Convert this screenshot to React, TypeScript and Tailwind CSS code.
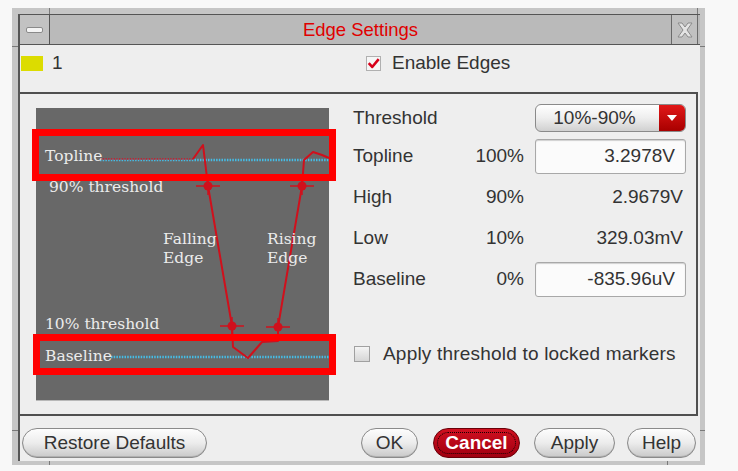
import React from "react";

const sans = { fontFamily: '"Liberation Sans", Arial, sans-serif' };

function Chart() {
  const red = "#d0101c";
  const markers: [number, number][] = [
    [208, 186],
    [302, 186],
    [232, 326],
    [278, 327],
  ];
  const serif = { fontFamily: '"DejaVu Serif", serif', fontSize: 15.5 };
  return (
    <svg width={310} height={300} viewBox="30 104 310 300" className="block shrink-0">
      <rect x={36} y={108} width={293} height={293} fill="#686868" />
      <line x1={36} x2={329} y1={400.5} y2={400.5} stroke="#b8b8b8" strokeWidth={1} />
      <line x1={100} x2={329} y1={160} y2={160} stroke="#45bde6" strokeWidth={2.5} strokeDasharray="1.5 1.2" />
      <line x1={100} x2={193} y1={159} y2={159} stroke={red} strokeWidth={1.5} strokeDasharray="1.5 1.2" />
      <line x1={111} x2={329} y1={357} y2={357} stroke="#45bde6" strokeWidth={2.5} strokeDasharray="1.5 1.2" />
      <polyline
        points="193,159 203,145 208,186 232,326 233,347 248,358 262,342 278,341 278,327 302,186 304,160 313,152 322,155 329,158"
        fill="none"
        stroke={red}
        strokeWidth={2}
        strokeLinejoin="round"
      />
      {markers.map(([x, y], i) => (
        <g key={i}>
          <line x1={x - 12} x2={x + 12} y1={y} y2={y} stroke={red} strokeWidth={1.5} />
          <line x1={x} x2={x} y1={y - 9} y2={y + 9} stroke={red} strokeWidth={1.5} />
          <circle cx={x} cy={y} r={4.5} fill={red} />
        </g>
      ))}
      <rect x={35.5} y={132.5} width={297} height={45} fill="none" stroke="#ff0000" strokeWidth={7} />
      <rect x={36.5} y={337.5} width={296} height={34} fill="none" stroke="#ff0000" strokeWidth={7} />
      <g fill="#ececec" style={serif}>
        <text x={45} y={161}>Topline</text>
        <text x={49} y={192}>90% threshold</text>
        <text x={163} y={244}>Falling</text>
        <text x={163} y={263}>Edge</text>
        <text x={267} y={244}>Rising</text>
        <text x={267} y={263}>Edge</text>
        <text x={45} y={329}>10% threshold</text>
        <text x={45} y={361}>Baseline</text>
      </g>
    </svg>
  );
}

function PillButton({ label, w, className = "" }: { label: string; w: string; className?: string }) {
  return (
    <div
      className={`h-[30px] ${w} rounded-full border border-[#8a8a8a] bg-gradient-to-b from-[#fdfdfd] via-[#ececec] to-[#c9c9c9] flex items-center justify-center text-[19px] text-[#333] shadow-[inset_0_-1px_0_#b0b0b0] ${className}`}
    >
      {label}
    </div>
  );
}

export default function App() {
  return (
    <div className="w-[738px] h-[471px] bg-[#f8f8f8] pt-[8px] pl-[12px] overflow-hidden" style={sans}>
      <div className="relative w-[693px] h-[457px] bg-[#c6c6c6] pt-[6px] pl-[6px] pr-[5px] pb-[4px]">
        {/* frame notches */}
        <div className="absolute left-[37px] top-0 w-px h-[6px] bg-[#7a7a7a]" />
        <div className="absolute left-[685px] top-0 w-px h-[6px] bg-[#7a7a7a]" />
        <div className="absolute left-0 top-[38px] w-[6px] h-px bg-[#7a7a7a]" />
        <div className="absolute left-0 top-[422px] w-[6px] h-px bg-[#7a7a7a]" />
        <div className="absolute right-0 top-[38px] w-[5px] h-px bg-[#7a7a7a]" />
        <div className="absolute right-0 top-[422px] w-[5px] h-px bg-[#7a7a7a]" />
        <div className="absolute left-[37px] bottom-0 w-px h-[4px] bg-[#7a7a7a]" />
        <div className="absolute left-[655px] bottom-0 w-px h-[4px] bg-[#7a7a7a]" />

        <div className="w-[682px] h-[447px] border-l-2 border-t border-[#555] flex flex-col bg-[#eeeeee]">
          {/* title bar */}
          <div className="h-[30px] shrink-0 flex border-b border-[#555] bg-[#bababa]">
            <div className="w-[30px] h-full border-r border-[#555] flex items-center justify-center bg-[#c2c2c2]">
              <div className="w-[17px] h-[6px] rounded-[2px] border border-[#8a8a8a] bg-[#f4f4f4]" />
            </div>
            <div className="flex-1 flex items-center justify-center text-[18.5px] text-[#e00000]">
              Edge Settings
            </div>
            <div className="w-[27px] h-full border-l border-r border-[#6a6a6a] flex items-center justify-center bg-[#c0c0c0]">
              <svg width="20" height="20" viewBox="0 0 20 20">
                <path
                  d="M3 3 L7 3 L10 7 L13 3 L17 3 L12 10 L17 17 L13 17 L10 13 L7 17 L3 17 L8 10 Z"
                  fill="#e4e4e4"
                  stroke="#8a8a8a"
                  strokeWidth="1"
                  strokeLinejoin="round"
                />
              </svg>
            </div>
            <div className="w-[2px]" />
          </div>

          {/* row 1 */}
          <div className="h-[47px] shrink-0 flex items-center pb-[10px] text-[19px] text-[#333]">
            <div className="ml-[1px] w-[22px] h-[15px] bg-[#dcdc00]" />
            <div className="ml-[9px] w-[20px]">1</div>
            <div className="ml-[294px] w-[15px] h-[15px] border border-[#b0b0b0] bg-[#f6f6f6] flex items-center justify-center">
              <svg width="15" height="15" viewBox="0 0 15 15">
                <path d="M2 7 L6 11.5 L13.5 2.5" fill="none" stroke="#d8001a" strokeWidth="3" strokeLinejoin="round" />
              </svg>
            </div>
            <div className="ml-[11px]">Enable Edges</div>
          </div>

          {/* group box */}
          <div className="w-[678px] h-[324px] shrink-0 border-t-2 border-r-2 border-b-2 border-[#4f4f4f] flex">
            <div className="ml-[10px] mt-[10px]">
              <Chart />
            </div>
            <div className="ml-[13px] mt-[10px] w-[333px] flex flex-col text-[19px] text-[#333]">
              <div className="h-[28px] grid grid-cols-[120px_51px_162px] items-center">
                <div>Threshold</div>
                <div />
                <div className="ml-[11px] h-[28px] rounded-[6px] border border-[#8a8a8a] bg-gradient-to-b from-[#ffffff] via-[#eeeeee] to-[#d0d0d0] flex overflow-hidden">
                  <div className="flex-1 flex items-center justify-center pr-[6px]">10%-90%</div>
                  <div className="w-[26px] h-full bg-gradient-to-b from-[#e21818] to-[#a80000] flex items-center justify-center">
                    <svg width="10" height="6" viewBox="0 0 10 6">
                      <path d="M0 0 L10 0 L5 6 Z" fill="#ffffff" />
                    </svg>
                  </div>
                </div>
              </div>
              <div className="mt-[7px] h-[35px] grid grid-cols-[120px_51px_162px] items-center">
                <div>Topline</div>
                <div className="text-right">100%</div>
                <div className="ml-[11px] h-[35px] rounded-[3px] border border-[#a8a8a8] bg-[#fbfbfb] shadow-[inset_0_1px_1px_#d0d0d0] flex items-center justify-end pr-[10px]">
                  3.2978V
                </div>
              </div>
              <div className="mt-[2px] h-[42px] grid grid-cols-[120px_51px_162px] items-center">
                <div>High</div>
                <div className="text-right">90%</div>
                <div className="text-right pr-[3px]">2.9679V</div>
              </div>
              <div className="h-[40px] grid grid-cols-[120px_51px_162px] items-center">
                <div>Low</div>
                <div className="text-right">10%</div>
                <div className="text-right pr-[3px]">329.03mV</div>
              </div>
              <div className="mt-[4px] h-[35px] grid grid-cols-[120px_51px_162px] items-center">
                <div>Baseline</div>
                <div className="text-right">0%</div>
                <div className="ml-[11px] h-[35px] rounded-[3px] border border-[#a8a8a8] bg-[#fbfbfb] shadow-[inset_0_1px_1px_#d0d0d0] flex items-center justify-end pr-[10px]">
                  -835.96uV
                </div>
              </div>
              <div className="mt-[49px] h-[16px] flex items-center">
                <div className="ml-[1px] w-[16px] h-[16px] border border-[#a0a0a0] bg-gradient-to-b from-[#f4f4f4] to-[#d6d6d6]" />
                <div className="ml-[13px] tracking-[0.2px]">Apply threshold to locked markers</div>
              </div>
            </div>
          </div>

          {/* buttons */}
          <div className="flex-1 flex items-start pt-[12px] pl-[2px] pr-[4px]">
            <PillButton label="Restore Defaults" w="w-[185px]" />
            <div className="flex-1" />
            <PillButton label="OK" w="w-[57px]" />
            <div className="ml-[15px] h-[30px] w-[87px] rounded-full border border-[#6a0008] bg-gradient-to-b from-[#d01020] to-[#a00010] p-[3px]">
              <div className="w-full h-full rounded-full border border-dotted border-[#1a0000] flex items-center justify-center text-[19px] font-bold text-white">
                Cancel
              </div>
            </div>
            <PillButton label="Apply" w="w-[81px]" className="ml-[14px]" />
            <PillButton label="Help" w="w-[69px]" className="ml-[12px]" />
          </div>
        </div>
      </div>
    </div>
  );
}
